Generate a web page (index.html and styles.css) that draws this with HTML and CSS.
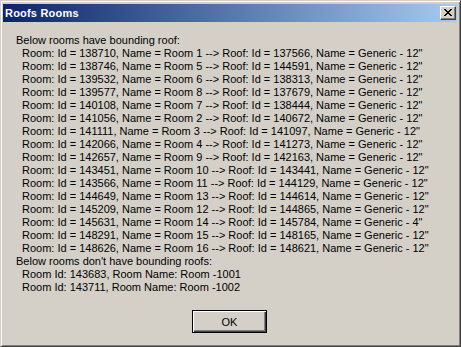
FILE: index.html
```html
<!DOCTYPE html>
<html>
<head>
<meta charset="utf-8">
<link rel="stylesheet" href="styles.css">
</head>
<body>
<div class="window">
  <div class="titlebar">
    <span class="title">Roofs Rooms</span>
    <button class="close" aria-label="Close">
      <svg width="8" height="7" viewBox="0 0 8 7" shape-rendering="crispEdges">
        <path d="M0 0h2v1h-2zM6 0h2v1h-2zM1 1h2v1h-2zM5 1h2v1h-2zM2 2h4v1h-4zM3 3h2v1h-2zM2 4h4v1h-4zM1 5h2v1h-2zM5 5h2v1h-2zM0 6h2v1h-2zM6 6h2v1h-2z" fill="#000"/>
      </svg>
    </button>
  </div>
  <div class="content">
    <div class="message">
      <div class="line">Below rooms have bounding roof:</div>
      <div class="line sub">Room: Id = 138710, Name = Room 1 --&gt; Roof: Id = 137566, Name = Generic - 12"</div>
      <div class="line sub">Room: Id = 138746, Name = Room 5 --&gt; Roof: Id = 144591, Name = Generic - 12"</div>
      <div class="line sub">Room: Id = 139532, Name = Room 6 --&gt; Roof: Id = 138313, Name = Generic - 12"</div>
      <div class="line sub">Room: Id = 139577, Name = Room 8 --&gt; Roof: Id = 137679, Name = Generic - 12"</div>
      <div class="line sub">Room: Id = 140108, Name = Room 7 --&gt; Roof: Id = 138444, Name = Generic - 12"</div>
      <div class="line sub">Room: Id = 141056, Name = Room 2 --&gt; Roof: Id = 140672, Name = Generic - 12"</div>
      <div class="line sub">Room: Id = 141111, Name = Room 3 --&gt; Roof: Id = 141097, Name = Generic - 12"</div>
      <div class="line sub">Room: Id = 142066, Name = Room 4 --&gt; Roof: Id = 141273, Name = Generic - 12"</div>
      <div class="line sub">Room: Id = 142657, Name = Room 9 --&gt; Roof: Id = 142163, Name = Generic - 12"</div>
      <div class="line sub">Room: Id = 143451, Name = Room 10 --&gt; Roof: Id = 143441, Name = Generic - 12"</div>
      <div class="line sub">Room: Id = 143566, Name = Room 11 --&gt; Roof: Id = 144129, Name = Generic - 12"</div>
      <div class="line sub">Room: Id = 144649, Name = Room 13 --&gt; Roof: Id = 144614, Name = Generic - 12"</div>
      <div class="line sub">Room: Id = 145209, Name = Room 12 --&gt; Roof: Id = 144865, Name = Generic - 12"</div>
      <div class="line sub">Room: Id = 145631, Name = Room 14 --&gt; Roof: Id = 145784, Name = Generic - 4"</div>
      <div class="line sub">Room: Id = 148291, Name = Room 15 --&gt; Roof: Id = 148165, Name = Generic - 12"</div>
      <div class="line sub">Room: Id = 148626, Name = Room 16 --&gt; Roof: Id = 148621, Name = Generic - 12"</div>
      <div class="line">Below rooms don't have bounding roofs:</div>
      <div class="line sub">Room Id: 143683, Room Name: Room -1001</div>
      <div class="line sub">Room Id: 143711, Room Name: Room -1002</div>
    </div>
    <div class="actions">
      <button class="ok">OK</button>
    </div>
  </div>
</div>
</body>
</html>
```

FILE: styles.css
```css
html, body {
  margin: 0;
  padding: 0;
  background: #d4d0c8;
}

.window {
  box-sizing: border-box;
  width: 461px;
  height: 347px;
  background: #d4d0c8;
  border-style: solid;
  border-width: 1px;
  border-color: #d4d0c8 #404040 #404040 #d4d0c8;
  box-shadow: inset 1px 1px #ffffff, inset -1px -1px #808080;
  padding: 3px 3px 0 2px;
  display: flex;
  flex-direction: column;
  font-family: "Liberation Sans", Arial, sans-serif;
  font-size: 11px;
  color: #000;
}

.titlebar {
  height: 18px;
  flex: none;
  display: flex;
  align-items: center;
  justify-content: space-between;
  background: linear-gradient(to right, #0a246a, #a6caf0);
  padding: 0 1px 0 2px;
}

.title {
  color: #fff;
  font-weight: bold;
  font-size: 11px;
  letter-spacing: 0.2px;
}

.close {
  box-sizing: border-box;
  width: 16px;
  height: 14px;
  padding: 0;
  margin: 0;
  background: #d4d0c8;
  border-style: solid;
  border-width: 1px;
  border-color: #ffffff #404040 #404040 #ffffff;
  box-shadow: inset -1px -1px #808080;
  display: flex;
  align-items: center;
  justify-content: center;
}

.close svg {
  display: block;
  margin: 0 1px 1px 0;
}

.content {
  flex: 1;
  display: flex;
  flex-direction: column;
  padding: 12px 0 0 13px;
}

.message {
  line-height: 13px;
}

.line {
  white-space: pre;
  height: 13px;
}

.sub {
  padding-left: 6px;
}

.actions {
  display: flex;
  justify-content: center;
  padding-top: 16px;
  padding-right: 14px;
}

.ok {
  box-sizing: border-box;
  width: 75px;
  height: 23px;
  padding: 0;
  margin: 0;
  background: #d4d0c8;
  border: 1px solid #000;
  box-shadow: inset 1px 1px #ffffff, inset -1px -1px #404040, inset -2px -2px #808080;
  font-family: "Liberation Sans", Arial, sans-serif;
  font-size: 11px;
  color: #000;
}
```
